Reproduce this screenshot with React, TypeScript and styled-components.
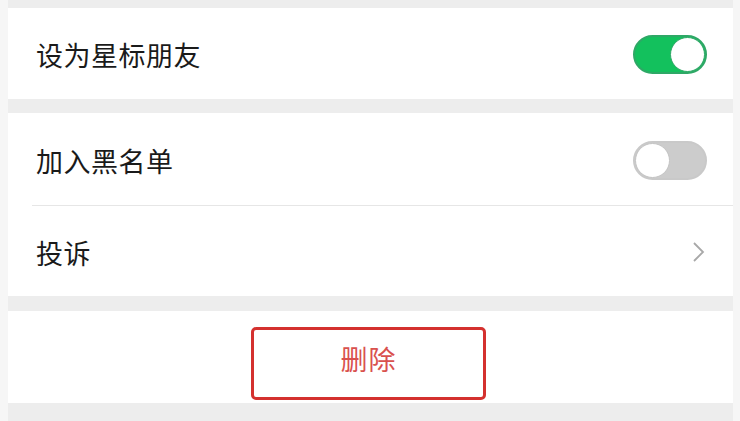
import React from "react";
import styled, { createGlobalStyle } from "styled-components";

const Global = createGlobalStyle`
  html, body { margin: 0; padding: 0; background: #f6f6f6; }
  body { font-family: "Noto Sans CJK SC", "Noto Sans", sans-serif; }
`;

const Page = styled.div`
  width: 740px;
  height: 421px;
  overflow: hidden;
  display: flex;
  background: #f6f6f6;
`;

const Column = styled.div`
  margin-left: 8px;
  width: 725px;
  height: 421px;
  background: #ededed;
  display: flex;
  flex-direction: column;
  padding-top: 8px;
  box-sizing: border-box;
`;

const Section = styled.div<{ $gap: number }>`
  background: #ffffff;
  margin-bottom: ${(p) => p.$gap}px;
  display: flex;
  flex-direction: column;
`;

const Row = styled.div<{ $h: number }>`
  height: ${(p) => p.$h}px;
  display: flex;
  align-items: center;
  justify-content: space-between;
  padding: 2px 26px 0 28px;
  box-sizing: border-box;
`;

const Divider = styled.div`
  height: 1px;
  margin-left: 24px;
  background: #e6e6e6;
`;

const Label = styled.span`
  font-size: 27px;
  color: #1a1a1a;
  letter-spacing: 0.5px;
`;

const Track = styled.div<{ $on: boolean }>`
  width: 74px;
  height: 39px;
  border-radius: 20px;
  box-sizing: border-box;
  background: ${(p) => (p.$on ? "#13c15d" : "#cccccc")};
  border: 2px solid ${(p) => (p.$on ? "#2ea866" : "#c9c9c9")};
  display: flex;
  justify-content: ${(p) => (p.$on ? "flex-end" : "flex-start")};
  align-items: center;
`;

const Knob = styled.div<{ $on: boolean }>`
  width: 35px;
  height: 35px;
  border-radius: 50%;
  background: #ffffff;
  box-sizing: border-box;
  border: 1px solid ${(p) => (p.$on ? "#2ea866" : "#c4c4c4")};
`;

const Chevron = styled.svg`
  width: 14px;
  height: 22px;
  margin-right: 1px;
`;

const ButtonArea = styled.div`
  height: 92px;
  display: flex;
  align-items: flex-start;
  justify-content: center;
  padding-top: 16px;
  box-sizing: border-box;
`;

const DeleteButton = styled.div`
  width: 235px;
  height: 73px;
  margin-left: -4px;
  padding-bottom: 10px;
  box-sizing: border-box;
  border: 3px solid #d4312f;
  border-radius: 5px;
  display: flex;
  align-items: center;
  justify-content: center;
  font-size: 27px;
  color: #d9514e;
  letter-spacing: 1px;
`;

const Switch = ({ on }: { on: boolean }) => (
  <Track $on={on}>
    <Knob $on={on} />
  </Track>
);

export default function App() {
  return (
    <Page>
      <Global />
      <Column>
        <Section $gap={14}>
          <Row $h={91}>
            <Label>设为星标朋友</Label>
            <Switch on />
          </Row>
        </Section>
        <Section $gap={15}>
          <Row $h={92}>
            <Label>加入黑名单</Label>
            <Switch on={false} />
          </Row>
          <Divider />
          <Row $h={90}>
            <Label>投诉</Label>
            <Chevron viewBox="0 0 14 22">
              <path d="M2 2 L11 11 L2 20" fill="none" stroke="#a8a8a8" strokeWidth="1.8" />
            </Chevron>
          </Row>
        </Section>
        <Section $gap={0}>
          <ButtonArea>
            <DeleteButton>删除</DeleteButton>
          </ButtonArea>
        </Section>
      </Column>
    </Page>
  );
}
